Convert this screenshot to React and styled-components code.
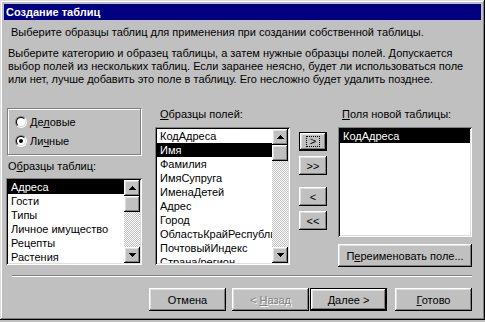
import styled, { createGlobalStyle } from "styled-components";

const GlobalStyle = createGlobalStyle`
  html, body {
    margin: 0;
    padding: 0;
    background: #c0c0c0;
  }
  body {
    font-family: "Liberation Sans", Arial, sans-serif;
    font-size: 11px;
    color: #000;
  }
  * { box-sizing: border-box; }
`;

const raised = `
  box-shadow: inset -1px -1px #000, inset 1px 1px #fff,
    inset -2px -2px #808080, inset 2px 2px #dfdfdf;
`;

const Window = styled.div`
  width: 485px;
  height: 320px;
  padding: 4px;
  background: #c0c0c0;
  display: flex;
  flex-direction: column;
  box-shadow: inset -1px -1px #000, inset 1px 1px #dfdfdf,
    inset -2px -2px #808080, inset 2px 2px #fff;
`;

const TitleBar = styled.div`
  height: 16px;
  padding-left: 2px;
  display: flex;
  align-items: center;
  background: #000080;
  color: #fff;
  font-weight: bold;
  font-size: 11px;
`;

const Text = styled.p`
  margin: ${(p) => p.$margin};
  line-height: 13px;
  white-space: pre-line;
`;

const MainRow = styled.div`
  display: flex;
  align-items: flex-start;
  margin-top: 21px;
  padding-left: 2px;
`;

const Column = styled.div`
  display: flex;
  flex-direction: column;
  width: ${(p) => p.$width}px;
  margin-left: ${(p) => p.$left || 0}px;
  padding-top: ${(p) => p.$top || 0}px;
`;

const GroupBox = styled.div`
  margin: 1px 0 0 1px;
  width: 134px;
  height: 47px;
  padding: 5px 0 0 7px;
  border: 1px solid #808080;
  box-shadow: inset 1px 1px #fff, 1px 1px #fff;
  display: flex;
  flex-direction: column;
  gap: 4px;
`;

const RadioRow = styled.label`
  display: flex;
  align-items: center;
  height: 15px;
  gap: 3px;
`;

const RadioCircle = styled.span`
  position: relative;
  width: 12px;
  height: 12px;
  border-radius: 50%;
  border: 1px solid;
  border-color: #808080 #fff #fff #808080;
  display: flex;
  &::before {
    content: "";
    flex: 1;
    border-radius: 50%;
    border: 1px solid;
    border-color: #000 #dfdfdf #dfdfdf #000;
    background: #fff;
  }
  &::after {
    content: "";
    display: ${(p) => (p.$checked ? "block" : "none")};
    position: absolute;
    left: 3px;
    top: 3px;
    width: 4px;
    height: 4px;
    border-radius: 50%;
    background: #000;
  }
`;

const Label = styled.div`
  line-height: 13px;
  height: 13px;
  margin-top: ${(p) => p.$top || 0}px;
  padding-left: ${(p) => p.$indent || 0}px;
  white-space: nowrap;
`;

const ListBox = styled.div`
  margin-top: ${(p) => p.$top}px;
  height: ${(p) => p.$height}px;
  padding: 2px;
  background: #fff;
  display: flex;
  box-shadow: inset 1px 1px #808080, inset -1px -1px #fff,
    inset 2px 2px #000, inset -2px -2px #dfdfdf;
`;

const Items = styled.div`
  flex: 1;
  min-width: 0;
  overflow: hidden;
`;

const Item = styled.div`
  height: 14px;
  line-height: 14px;
  padding-left: 3px;
  white-space: nowrap;
  overflow: hidden;
  background: ${(p) => (p.$selected ? "#000" : "transparent")};
  color: ${(p) => (p.$selected ? "#fff" : "#000")};
`;

const ScrollBar = styled.div`
  width: 16px;
  display: flex;
  flex-direction: column;
  background-color: #fff;
  background-image: repeating-conic-gradient(#c0c0c0 0 25%, #fff 0 50%);
  background-size: 2px 2px;
`;

const ScrollButton = styled.div`
  width: 16px;
  height: 16px;
  background: #c0c0c0;
  display: flex;
  align-items: center;
  justify-content: center;
  ${raised}
`;

const Track = styled.div`
  flex: 1;
`;

const Button = styled.button`
  font: inherit;
  color: #000;
  width: ${(p) => p.$width}px;
  height: ${(p) => p.$height}px;
  margin: ${(p) => p.$margin || 0};
  padding: 0;
  border: none;
  background: #c0c0c0;
  display: flex;
  align-items: center;
  justify-content: center;
  white-space: nowrap;
  ${raised}
  ${(p) =>
    p.$default &&
    `box-shadow: inset 0 0 0 1px #000, inset -2px -2px #000, inset 2px 2px #fff,
      inset -3px -3px #808080, inset 3px 3px #dfdfdf;`}
  &:disabled {
    color: #808080;
    text-shadow: 1px 1px #fff;
  }
`;

const FocusRect = styled.span`
  border: 1px dotted #000;
  padding: 0 3px;
  line-height: 9px;
  height: 11px;
  display: flex;
  align-items: center;
`;

const Separator = styled.div`
  margin: 8px 0 0 8px;
  width: 460px;
  height: 2px;
  border-top: 1px solid #808080;
  border-bottom: 1px solid #fff;
`;

const ButtonRow = styled.div`
  display: flex;
  justify-content: flex-end;
  margin-top: 11px;
  padding-right: 9px;
`;

const Arrow = ({ down }) => (
  <svg width="7" height="4" viewBox="0 0 7 4">
    <polygon
      points={down ? "0,0 7,0 3.5,4" : "3.5,0 7,4 0,4"}
      fill="#000"
      shapeRendering="crispEdges"
    />
  </svg>
);

const Scroller = () => (
  <ScrollBar>
    <ScrollButton>
      <Arrow />
    </ScrollButton>
    <ScrollButton />
    <Track />
    <ScrollButton>
      <Arrow down />
    </ScrollButton>
  </ScrollBar>
);

const tables = ["Адреса", "Гости", "Типы", "Личное имущество", "Рецепты", "Растения"];
const fields = [
  "КодАдреса",
  "Имя",
  "Фамилия",
  "ИмяСупруга",
  "ИменаДетей",
  "Адрес",
  "Город",
  "ОбластьКрайРеспублика",
  "ПочтовыйИндекс",
  "Страна/регион",
];

export default function App() {
  return (
    <>
      <GlobalStyle />
      <Window>
        <TitleBar>Создание таблиц</TitleBar>
        <Text $margin="6px 0 0 7px">
          Выберите образцы таблиц для применения при создании собственной таблицы.
        </Text>
        <Text $margin="8px 0 0 4px">
          {"Выберите категорию и образец таблицы, а затем нужные образцы полей. Допускается\nвыбор полей из нескольких таблиц. Если заранее неясно, будет ли использоваться поле\nили нет, лучше добавить это поле в таблицу. Его несложно будет удалить позднее."}
        </Text>

        <MainRow>
          <Column $width={136}>
            <GroupBox>
              <RadioRow>
                <RadioCircle />
                <span>
                  Де<u>л</u>овые
                </span>
              </RadioRow>
              <RadioRow>
                <RadioCircle $checked />
                <span>
                  Ли<u>ч</u>ные
                </span>
              </RadioRow>
            </GroupBox>
            <Label $top={5} $indent={2}>
              О<u>б</u>разцы таблиц:
            </Label>
            <ListBox $top={5} $height={87}>
              <Items>
                {tables.map((t, i) => (
                  <Item key={t} $selected={i === 0}>
                    {t}
                  </Item>
                ))}
              </Items>
              <Scroller />
            </ListBox>
          </Column>

          <Column $width={135} $left={13}>
            <Label $top={1} $indent={5}>
              <u>О</u>бразцы полей:
            </Label>
            <ListBox $top={6} $height={138}>
              <Items>
                {fields.map((f, i) => (
                  <Item key={f} $selected={i === 1}>
                    {f}
                  </Item>
                ))}
              </Items>
              <Scroller />
            </ListBox>
          </Column>

          <Column $width={28} $left={9} $top={25}>
            <Button $width={28} $height={19} $default>
              <FocusRect>&gt;</FocusRect>
            </Button>
            <Button $width={28} $height={19} $margin="5px 0 0 0">
              &gt;&gt;
            </Button>
            <Button $width={28} $height={19} $margin="12px 0 0 0">
              &lt;
            </Button>
            <Button $width={28} $height={19} $margin="5px 0 0 0">
              &lt;&lt;
            </Button>
          </Column>

          <Column $width={134} $left={11}>
            <Label $top={1} $indent={4}>
              <u>П</u>оля новой таблицы:
            </Label>
            <ListBox $top={6} $height={110}>
              <Items>
                <Item $selected>КодАдреса</Item>
              </Items>
            </ListBox>
            <Button $width={134} $height={23} $margin="7px 0 0 0">
              <span>
                П<u>е</u>реименовать поле...
              </span>
            </Button>
          </Column>
        </MainRow>

        <Separator />

        <ButtonRow>
          <Button $width={77} $height={23}>
            Отмена
          </Button>
          <Button $width={77} $height={23} $margin="0 0 0 6px" disabled>
            <span>
              &lt; <u>Н</u>азад
            </span>
          </Button>
          <Button $width={77} $height={23} $margin="0 0 0 1px" $default>
            <span>
              <u>Д</u>алее &gt;
            </span>
          </Button>
          <Button $width={77} $height={23} $margin="0 0 0 8px">
            <span>
              <u>Г</u>отово
            </span>
          </Button>
        </ButtonRow>
      </Window>
    </>
  );
}
